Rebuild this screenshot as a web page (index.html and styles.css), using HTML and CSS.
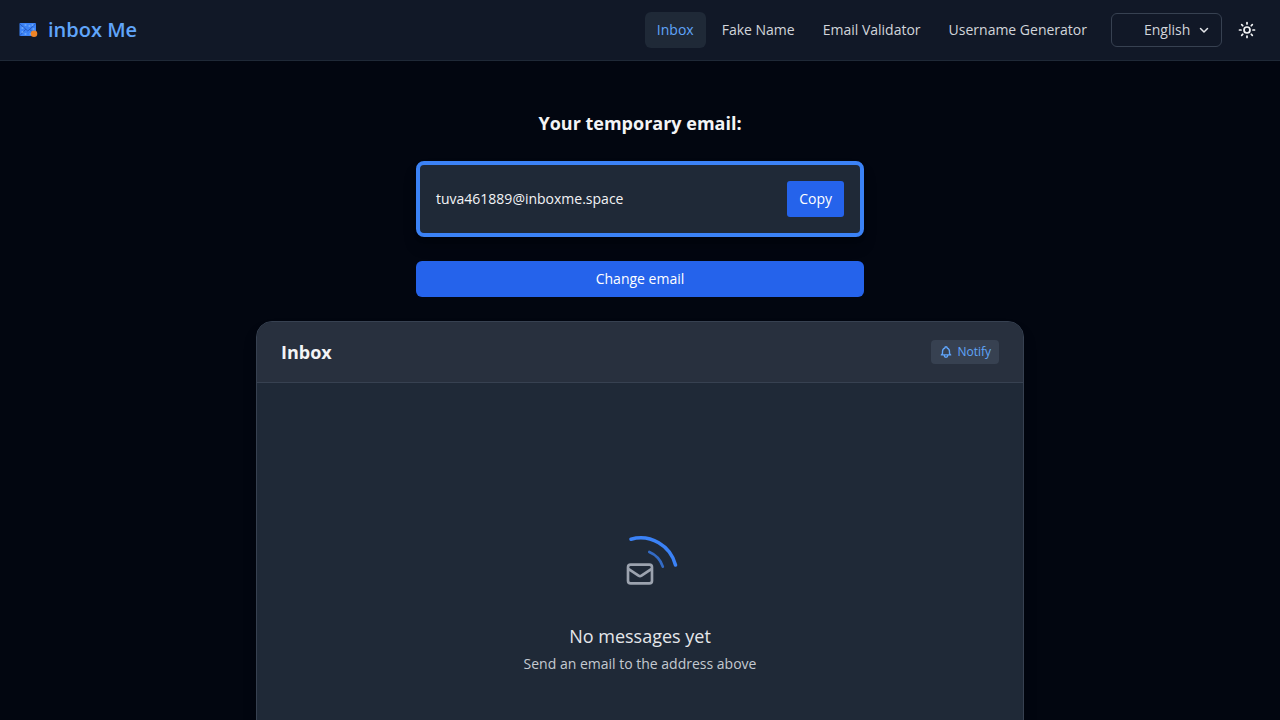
FILE: index.html
```html
<!DOCTYPE html>
<html lang="en">
<head>
<meta charset="utf-8">
<meta name="viewport" content="width=device-width, initial-scale=1">
<title>inbox Me</title>
<link rel="stylesheet" href="styles.css">
</head>
<body>
<header class="topbar">
  <a class="brand" href="#">
    <svg class="brand-logo" viewBox="0 0 24 24" aria-hidden="true">
      <rect x="3.500" y="5" width="16.500" height="13" rx="1" fill="#3b82f6"/>
      <path d="M4 6l7.800 7 7.700-7M4 17.500l5.500-6M19.500 17.500l-5.500-6" fill="none" stroke="#1e50b8" stroke-width="0.8"/>
      <path d="M6 10h1M6 14h1M9 16h1M9 7h1M13 8h1M16 7h1M14 16h1M17 11h1" stroke="#93c5fd" stroke-width="1"/>
      <circle cx="18" cy="15.700" r="3.300" fill="#ee8427"/>
    </svg>
    <span>inbox Me</span>
  </a>
  <div class="topbar-end">
    <nav class="nav">
      <a class="nav-link nav-link-active" href="#">Inbox</a>
      <a class="nav-link" href="#">Fake Name</a>
      <a class="nav-link" href="#">Email Validator</a>
      <a class="nav-link" href="#">Username Generator</a>
    </nav>
    <div class="language">
      <select class="language-select" aria-label="Language"><option>English</option></select>
      <svg class="language-arrow" viewBox="0 0 24 24" aria-hidden="true"><path d="M5 9l7 7 7-7"/></svg>
    </div>
    <button class="theme-button" type="button" aria-label="Toggle theme">
      <svg class="theme-icon" viewBox="0 0 24 24" aria-hidden="true"><circle cx="12" cy="12" r="4"/><path d="M12 2v2M12 20v2M4.930 4.930l1.410 1.410M17.660 17.660l1.410 1.410M2 12h2M20 12h2M6.340 17.660l-1.410 1.410M19.070 4.930l-1.410 1.410"/></svg>
    </button>
  </div>
</header>
<main class="page">
  <section class="address">
    <h1 class="address-title">Your temporary email:</h1>
    <div class="address-box">
      <span class="address-text">tuva461889@inboxme.space</span>
      <button class="button copy-button" type="button">Copy</button>
    </div>
    <button class="button change-button" type="button">Change email</button>
  </section>
  <section class="inbox">
    <div class="inbox-head">
      <h2 class="inbox-title">Inbox</h2>
      <button class="notify-button" type="button">
        <svg class="notify-icon" viewBox="0 0 24 24" aria-hidden="true"><path d="M15 17h5l-1.405-1.405A2.032 2.032 0 0118 14.158V11a6.002 6.002 0 00-4-5.659V5a2 2 0 10-4 0v.341C7.670 6.165 6 8.388 6 11v3.159c0 .538-.214 1.055-.595 1.436L4 17h5m6 0v1a3 3 0 11-6 0v-1m6 0H9"/></svg>
        <span>Notify</span>
      </button>
    </div>
    <div class="empty">
      <svg class="empty-art" viewBox="0 0 80 80" aria-hidden="true">
        <path class="arc-outer" d="M31 5.200A36 36 0 0 1 75.500 31"/>
        <path class="arc-inner" d="M49.300 18A24 24 0 0 1 62.800 32.600"/>
        <path class="envelope" transform="translate(24 24) scale(1.333)" d="M3 8l7.890 5.260a2 2 0 002.220 0L21 8M5 19h14a2 2 0 002-2V7a2 2 0 00-2-2H5a2 2 0 00-2 2v10a2 2 0 002 2z"/>
      </svg>
      <p class="empty-title">No messages yet</p>
      <p class="empty-text">Send an email to the address above</p>
    </div>
  </section>
</main>
</body>
</html>
```
FILE: styles.css
```css
* { box-sizing: border-box; }
body {
  margin: 0;
  background: #020610;
  color: #f3f4f6;
  font: 14px/20px "Open Sans", "Noto Sans", sans-serif;
}
h1, h2, p { margin: 0; }
a { text-decoration: none; }
button, select { font: inherit; cursor: pointer; }
svg { fill: none; stroke-linecap: round; stroke-linejoin: round; }

.topbar {
  display: flex;
  align-items: center;
  justify-content: space-between;
  padding: 12px 16px;
  background: #111827;
  border-bottom: 1px solid #1f2937;
}
.brand {
  display: flex;
  align-items: center;
  gap: 8px;
  color: #60a5fa;
  font-size: 20px;
  line-height: 28px;
  font-weight: 600;
}
.brand-logo { width: 24px; height: 24px; }
.topbar-end { display: flex; align-items: center; gap: 8px; }
.nav { display: flex; gap: 4px; margin-right: 4px; }
.nav-link { padding: 8px 12px; border-radius: 6px; color: #d1d5db; }
.nav-link-active { background: #1f2937; color: #60a5fa; }
.language { position: relative; }
.language-select {
  display: block;
  appearance: none;
  height: 34px;
  padding: 0 30px 0 32px;
  border: 1px solid #374151;
  border-radius: 6px;
  background: transparent;
  color: #d1d5db;
}
.language-arrow {
  position: absolute;
  top: 11px;
  right: 12px;
  width: 12px;
  height: 12px;
  stroke: #e5e7eb;
  stroke-width: 3;
  pointer-events: none;
}
.theme-button {
  display: flex;
  padding: 8px;
  border: 0;
  background: transparent;
}
.theme-icon { width: 18px; height: 18px; stroke: #f3f4f6; stroke-width: 2.3; }

.page {
  display: flex;
  flex-direction: column;
  align-items: center;
  gap: 24px;
  padding: 48px 16px 0;
}
.address {
  display: flex;
  flex-direction: column;
  gap: 24px;
  width: 100%;
  max-width: 448px;
}
.address-title {
  font-size: 18px;
  line-height: 28px;
  font-weight: 700;
  text-align: center;
}
.address-box {
  display: flex;
  align-items: center;
  justify-content: space-between;
  padding: 16px;
  border: 4px solid #3b82f6;
  border-radius: 8px;
  background: #1f2937;
  box-shadow: 0 10px 15px -3px #0004, 0 4px 6px -4px #0004;
}
.button {
  padding: 8px 12px;
  border: 0;
  background: #2563eb;
  color: #ffffff;
}
.copy-button { border-radius: 3px; }
.change-button { border-radius: 6px; }

.inbox {
  width: 100%;
  max-width: 768px;
  border: 1px solid #374151;
  border-radius: 16px;
  background: #1f2937;
  overflow: hidden;
  box-shadow: 0 10px 15px -3px #0004;
}
.inbox-head {
  display: flex;
  align-items: center;
  justify-content: space-between;
  padding: 16px 24px;
  border-bottom: 1px solid #374151;
  background: #28303e;
}
.inbox-title { font-size: 18px; line-height: 28px; font-weight: 700; }
.notify-button {
  display: flex;
  align-items: center;
  gap: 4px;
  padding: 4px 8px;
  border: 0;
  border-radius: 4px;
  background: #374151;
  color: #60a5fa;
  font-size: 12px;
  line-height: 16px;
}
.notify-icon { width: 14px; height: 14px; stroke: #60a5fa; stroke-width: 2.3; }
.empty {
  display: flex;
  flex-direction: column;
  align-items: center;
  padding: 151px 24px;
  text-align: center;
}
.empty-art { width: 80px; height: 80px; margin-bottom: 8px; }
.arc-outer { stroke: #3b82f6; stroke-width: 3.5; }
.arc-inner { stroke: #3b82f6; stroke-width: 2.7; opacity: 0.75; }
.envelope { stroke: #9ca3af; stroke-width: 2; }
.empty-title { font-size: 18px; line-height: 28px; color: #e5e7eb; }
.empty-text { margin-top: 4px; color: #c4c9d1; }
```
